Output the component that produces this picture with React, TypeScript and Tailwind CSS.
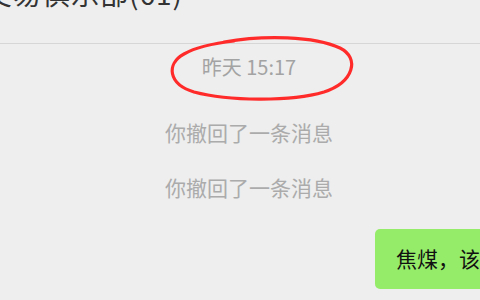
export default function App() {
  return (
    <div
      className="relative w-[480px] h-[300px] overflow-hidden bg-[#eeeeee]"
      style={{ fontFamily: '"Noto Sans CJK SC", "Noto Sans", sans-serif' }}
    >
      {/* chat title, scrolled partly out of view */}
      <header className="h-[44px] border-b border-[#d6d6d6] overflow-hidden">
        <div className="-mt-[21px] -ml-[16px] whitespace-nowrap text-[28px] leading-none tracking-[1px] text-[#333333]">
          交易俱乐部(61)
        </div>
      </header>

      {/* messages */}
      <div className="flex flex-col items-center pl-[18px]">
        <div className="mt-[11px] text-[20px] leading-[24px] text-[#a3a3a3]">昨天 15:17</div>
        <div className="mt-[41px] text-[21px] leading-[24px] text-[#ababab]">你撤回了一条消息</div>
        <div className="mt-[31px] text-[21px] leading-[24px] text-[#ababab]">你撤回了一条消息</div>
      </div>

      <div className="mt-[30px] pl-[375px]">
        <div className="inline-flex h-[60px] items-center whitespace-nowrap rounded-[5px] bg-[#95ec69] pl-[21px] pr-4 text-[21px] text-[#111111]">
          焦煤，该上车了
        </div>
      </div>

      {/* red annotation ring */}
      <svg
        className="pointer-events-none absolute left-[164px] top-[34px]"
        width="194"
        height="68"
        viewBox="0 0 194 68"
        fill="none"
      >
        <path
          d="M60 8 C100 1 150 2 176 14 C196 24 190 48 160 58 C126 68 64 67 30 58 C4 50 2 30 20 20 C34 12 52 9 70 7"
          stroke="#ff2b2b"
          strokeWidth="3.2"
          strokeLinecap="round"
        />
      </svg>
    </div>
  );
}
